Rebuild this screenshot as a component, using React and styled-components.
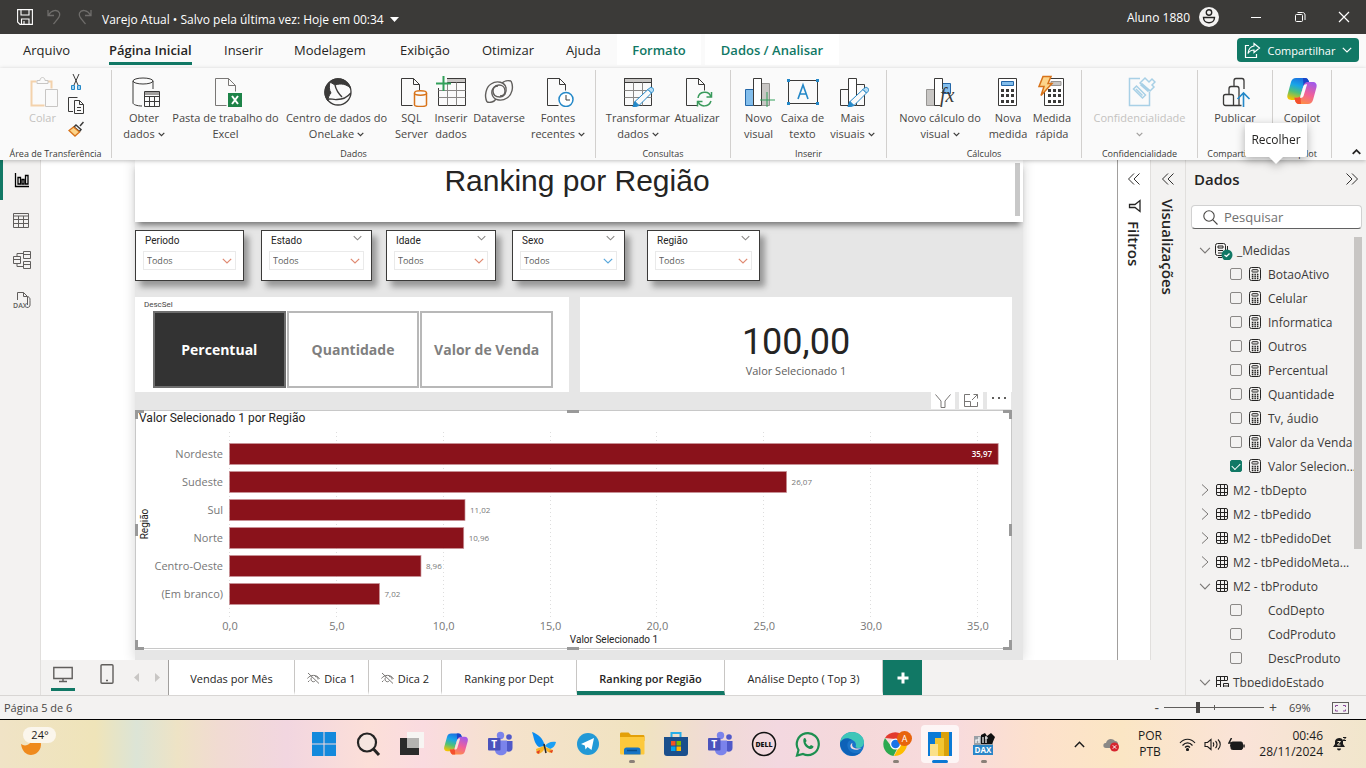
import React from 'react';
import styled, { createGlobalStyle, css } from 'styled-components';

const ui = "'Open Sans', 'Noto Sans', sans-serif";
const din = "Roboto, 'Open Sans', sans-serif";
const green = '#117865';

const Global = createGlobalStyle`
  * { box-sizing: border-box; }
  body { margin: 0; font-family: ${ui}; font-size: 12px; color: #252423; background: #f3f2f1; }
  button, input, select { font: inherit; color: inherit; }
  button { border: 0; padding: 0; background: none; cursor: pointer; }
  svg { display: block; flex: none; }
  h1, h2, p { margin: 0; font-weight: 400; }
`;

const Window = styled.div`
  display: flex;
  flex-direction: column;
  height: 100vh;
  min-height: 600px;
  overflow: hidden;
`;

/* ---------- title bar ---------- */
const TitleBar = styled.header`
  display: flex;
  align-items: center;
  height: 34px;
  flex: none;
  padding: 0 14px 0 16px;
  background: #3b3a38;
  color: #fff;
`;
const QuickTools = styled.div`
  display: flex;
  gap: 12px;
  margin-right: 8px;
`;
const FileName = styled.button`
  display: flex;
  align-items: center;
  gap: 6px;
  padding-top: 4px;
  font-size: 12px;
  white-space: nowrap;
`;
const Account = styled.div`
  display: flex;
  align-items: center;
  gap: 9px;
  margin-left: auto;
  font-size: 12px;
`;
const WindowButtons = styled.div`
  display: flex;
  gap: 28px;
  margin-left: 29px;
`;

/* ---------- menu ---------- */
const MenuBar = styled.nav`
  display: flex;
  height: 34px;
  flex: none;
  padding: 0 7px 0 23px;
  background: #fafafa;
  font-size: 13px;
`;
const MenuTab = styled.button`
  width: ${p => p.$w}px;
  flex: none;
  text-align: left;
  white-space: nowrap;
  height: 31px;
  span {
    display: inline-block;
    height: 31px;
    line-height: 32px;
    ${p => p.$active && css`font-weight: 600; border-bottom: 3px solid ${green};`}
  }
`;
const ContextTab = styled.button`
  width: ${p => p.$w}px;
  height: 31px;
  margin-right: 4px;
  background: #fff;
  color: ${green};
  font-weight: 600;
  white-space: nowrap;
`;
const ShareButton = styled.button`
  display: flex;
  align-items: center;
  justify-content: center;
  gap: 7px;
  width: 122px;
  height: 24px;
  margin: 4px 0 0 auto;
  border-radius: 4px;
  background: ${green};
  color: #fff;
  font-size: 11px;
`;

/* ---------- ribbon ---------- */
const Ribbon = styled.section`
  position: relative;
  z-index: 2;
  display: flex;
  height: 92px;
  flex: none;
  padding-top: 2px;
  background: #fafafa;
  box-shadow: 0 1px 4px rgba(0, 0, 0, 0.25);
  color: #3b3a39;
`;
const RibbonGroup = styled.div`
  display: flex;
  flex-direction: column;
  width: ${p => p.$w}px;
  flex: none;
  height: 88px;
  border-right: 1px solid #d2d0ce;
`;
const GroupItems = styled.div`
  display: flex;
  justify-content: center;
  flex: 1;
`;
const GroupName = styled.div`
  text-align: center;
  font-size: 9px;
  line-height: 9px;
  white-space: nowrap;
`;
const RibbonButton = styled.button`
  display: flex;
  flex-direction: column;
  align-items: center;
  width: ${p => p.$w}px;
  flex: none;
  padding-top: 5px;
  color: ${p => (p.disabled ? '#c4c2c0' : '#484644')};
  font-size: 11px;
  line-height: 16px;
  white-space: nowrap;
  > span { display: flex; align-items: center; gap: 3px; height: 16px; }
  > svg { margin-bottom: 3px; }
`;
const ClipTools = styled.div`
  display: flex;
  flex-direction: column;
  gap: 7px;
  padding: 4px 9px 0 0;
`;
const Collapse = styled.button`
  align-self: flex-end;
  margin: 0 5px 5px auto;
`;
const Tooltip = styled.div`
  position: absolute;
  right: 59px;
  top: 55px;
  width: 62px;
  height: 34px;
  line-height: 34px;
  text-align: center;
  font-size: 12px;
  background: #fff;
  color: #252423;
  border-radius: 2px;
  filter: drop-shadow(0 3px 5px rgba(0, 0, 0, 0.3));
  &::after {
    content: '';
    position: absolute;
    left: 23px;
    top: 33px;
    border: 8px solid transparent;
    border-top-color: #fff;
  }
`;

/* ---------- workspace ---------- */
const Workspace = styled.main`
  display: flex;
  flex: 1;
  min-height: 0;
`;
const Rail = styled.nav`
  display: flex;
  flex-direction: column;
  width: 41px;
  flex: none;
  border-right: 1px solid #e1dfdd;
`;
const RailButton = styled.button`
  display: flex;
  align-items: center;
  justify-content: center;
  height: 40px;
  border-left: 3px solid ${p => (p.$active ? green : 'transparent')};
`;
const Editor = styled.div`
  display: flex;
  flex-direction: column;
  flex: 1;
  min-width: 0;
`;
const CanvasRow = styled.div`
  display: flex;
  flex: 1;
  min-height: 0;
`;
const Stage = styled.div`
  display: flex;
  justify-content: center;
  flex: 1;
  min-width: 0;
  overflow: hidden;
  background: #fff;
`;
const ReportPage = styled.article`
  display: flex;
  flex-direction: column;
  width: 888px;
  max-width: 100%;
  background: #e6e6e6;
  box-shadow: 0 0 12px rgba(0, 0, 0, 0.16);
`;
const TitleCard = styled.div`
  display: flex;
  justify-content: space-between;
  height: 62px;
  flex: none;
  padding: 3px 3px 0 4px;
  background: #fff;
  box-shadow: 0 6px 6px -3px rgba(0, 0, 0, 0.5);
  h1 {
    flex: 1;
    text-align: center;
    font-family: 'Liberation Sans', Arial, sans-serif;
    font-size: 30px;
    line-height: 36px;
  }
`;
const CardScroll = styled.div`
  width: 5px;
  height: 53px;
  background: #c8c8c8;
`;
const Slicers = styled.div`
  display: flex;
  padding-top: 8px;
`;
const Slicer = styled.section`
  width: ${p => p.$w}px;
  margin-right: ${p => p.$gap}px;
  height: 51px;
  padding: 4px 7px 0;
  border: 1px solid #3b3a39;
  background: #fff;
  box-shadow: 5px 6px 6px rgba(0, 0, 0, 0.34);
`;
const SlicerHead = styled.div`
  display: flex;
  justify-content: space-between;
  padding: 0 2px 1px;
  font-family: ${din};
  font-size: 10px;
  line-height: 11px;
`;
const SelectBox = styled.div`
  display: grid;
  align-items: center;
  height: 19px;
  margin-top: 4px;
  border: 1px solid #eaeaea;
  select, svg { grid-area: 1 / 1; }
  select {
    appearance: none;
    width: 100%;
    border: 0;
    padding: 0 3px;
    background: none;
    font-size: 9px;
    color: #605e5c;
  }
  svg { justify-self: end; margin-right: 3px; pointer-events: none; }
`;
const Cards = styled.div`
  display: flex;
  gap: 11px;
  padding: 16px 11px 0 0;
`;
const Card = styled.section`
  flex: ${p => p.$grow} 1 0;
  height: 95px;
  background: #fff;
`;
const CardCaption = styled.div`
  padding: 3px 9px 0;
  font-size: 8px;
  line-height: 10px;
  color: #484644;
  font-family: ${din};
`;
const Tiles = styled.div`
  display: flex;
  gap: 1px;
  margin: 1px 16px 0 18px;
`;
const Tile = styled.button`
  flex: 1;
  height: 77px;
  border: 2px solid ${p => (p.$on ? '#6e6e6e' : '#b8b8b8')};
  background: ${p => (p.$on ? '#333' : '#fff')};
  color: ${p => (p.$on ? '#fff' : '#7f7f7f')};
  font-size: 14px;
  font-weight: 700;
`;
const Kpi = styled.div`
  text-align: center;
  padding-top: 24px;
  strong {
    display: block;
    font-family: ${din};
    font-size: 36px;
    line-height: 42px;
    font-weight: 400;
  }
  span { display: block; font-size: 11px; line-height: 16px; color: #605e5c; }
`;
const VisualTools = styled.div`
  display: flex;
  justify-content: flex-end;
  gap: 4px;
  height: 18px;
  padding-right: 12px;
`;
const VisualTool = styled.button`
  display: flex;
  align-items: center;
  justify-content: center;
  width: 24px;
  height: 17px;
  background: #fff;
`;
const ChartFrame = styled.figure`
  margin: 0 11px 0 0;
  background: #fff;
  svg { width: 100%; height: auto; }
`;
const CatLabel = styled.text`
  font: 11px ${ui};
  fill: #777;
  text-anchor: ${p => p.$anchor || 'end'};
`;
const ValLabel = styled.text`
  font: 8px ${ui};
  fill: ${p => (p.$inside ? '#fff' : '#777')};
  font-weight: ${p => (p.$inside ? 600 : 400)};
  text-anchor: ${p => (p.$inside ? 'end' : 'start')};
`;
const AxisName = styled.text`
  font: 10px ${din};
  fill: #252423;
  text-anchor: middle;
`;
const ChartTitle = styled.text`
  font: 12px ${din};
  fill: #252423;
`;

/* ---------- side panes ---------- */
const SlimPane = styled.aside`
  display: flex;
  flex-direction: column;
  align-items: center;
  width: ${p => p.$w}px;
  flex: none;
  padding-top: 12px;
  gap: 8px;
  border-right: 1px solid #e1dfdd;
  ${p => p.$white && css`background: #fff; border-left: 1px solid #a19f9d;`}
  > button { margin-bottom: 5px; }
  h2 { writing-mode: vertical-rl; font-size: 15px; line-height: 18px; font-weight: 600; }
`;
const DataPane = styled.aside`
  display: flex;
  flex-direction: column;
  width: 180px;
  flex: none;
  padding: 8px 4px 8px 5px;
`;
const DataHead = styled.div`
  display: flex;
  justify-content: space-between;
  align-items: center;
  padding: 0 3px;
  height: 21px;
  h2 { font-size: 15px; font-weight: 600; }
`;
const Search = styled.label`
  display: flex;
  align-items: center;
  gap: 6px;
  height: 24px;
  flex: none;
  margin-top: 16px;
  padding-left: 11px;
  border: 1px solid #d1d1d1;
  border-bottom-color: #616161;
  border-radius: 4px;
  background: #fff;
  input {
    width: 100%;
    min-width: 0;
    border: 0;
    padding: 0;
    outline: 0;
    background: none;
    font-size: 13px;
  }
  input::placeholder { color: #707070; opacity: 1; }
`;
const TreeWrap = styled.div`
  display: flex;
  flex: 1;
  min-height: 0;
  margin-top: 8px;
  overflow: hidden;
`;
const Tree = styled.ul`
  flex: 1;
  min-width: 0;
  margin: 1px 0 0;
  padding: 0 0 0 8px;
  list-style: none;
`;
const TreeRow = styled.li`
  display: flex;
  align-items: center;
  height: 24px;
  padding-left: ${p => (p.$field ? 31 : 0)}px;
  font-size: 12px;
  color: #3b3a39;
  white-space: nowrap;
`;
const TableToggle = styled.button`
  display: flex;
  align-items: center;
  gap: 4px;
`;
const FieldLabel = styled.label`
  display: flex;
  align-items: center;
  gap: 6px;
`;
const Check = styled.input`
  appearance: none;
  width: 12px;
  height: 12px;
  margin: 0;
  border: 1px solid #8a8886;
  border-radius: 2px;
  background: transparent;
  &:checked {
    border-color: ${green};
    background: ${green};
    display: grid;
    place-content: center;
  }
  &:checked::before {
    content: '';
    width: 7px;
    height: 4px;
    margin-bottom: 2px;
    border: solid #fff;
    border-width: 0 0 1px 1px;
    transform: rotate(-45deg);
  }
`;
const TreeScroll = styled.div`
  width: 8px;
  height: 312px;
  background: #c8c6c4;
`;

/* ---------- page tabs and status ---------- */
const PageBar = styled.div`
  display: flex;
  height: 35px;
  flex: none;
`;
const ViewModes = styled.div`
  display: flex;
  width: 128px;
  flex: none;
  align-items: center;
  padding-left: 10px;
  border-right: 1px solid #a19f9d;
`;
const ModeButton = styled.button`
  display: flex;
  justify-content: center;
  align-items: flex-start;
  width: 24px;
  height: 27px;
  margin-right: ${p => p.$gap}px;
  border-bottom: 3px solid ${p => (p.$active ? green : 'transparent')};
`;
const PageTab = styled.button`
  display: flex;
  align-items: center;
  justify-content: center;
  gap: 4px;
  width: ${p => p.$w}px;
  flex: none;
  padding-top: 5px;
  border-right: 1px solid #c8c6c4;
  border-bottom: 4px solid ${p => (p.$active ? green : '#fff')};
  background: #fff;
  font-size: 11px;
  font-weight: ${p => (p.$active ? 600 : 400)};
  white-space: nowrap;
`;
const AddPage = styled.button`
  display: flex;
  align-items: center;
  justify-content: center;
  width: 39px;
  background: ${green};
`;
const StatusBar = styled.footer`
  display: flex;
  align-items: center;
  height: 25px;
  flex: none;
  padding: 0 17px 0 4px;
  border-top: 1px solid #d8d6d4;
  border-bottom: 1px solid #000;
  color: #484644;
  font-size: 11px;
`;
const Zoom = styled.div`
  display: flex;
  align-items: center;
  gap: 5px;
  margin-left: auto;
  button { font-size: 14px; line-height: 14px; }
  output { width: 24px; margin: 0 14px 0 7px; }
`;
const Slider = styled.input`
  appearance: none;
  width: 100px;
  height: 11px;
  margin: 0;
  background:
    linear-gradient(#605e5c, #605e5c) 50px 50% / 1px 5px no-repeat,
    linear-gradient(#605e5c, #605e5c) 0 50% / 100% 1px no-repeat;
  &::-webkit-slider-thumb {
    appearance: none;
    width: 4px;
    height: 11px;
    background: #484644;
  }
`;

/* ---------- taskbar ---------- */
const Taskbar = styled.footer`
  display: flex;
  align-items: stretch;
  height: 48px;
  flex: none;
  color: #1b1b1b;
  background: linear-gradient(90deg, #f0e3c6 0, #efe4b9 7%, #dce4d6 10%, #eee3c5 13%, #f1dbd2 16%, #f2d6e0 21%, #fcdfd8 27%, #fadbe0 31%, #f5e2cc 37%, #f0e3c0 47%, #f0dbd5 52%, #f3d8e0 57%, #f5d9da 63%, #f8dbdd 70%, #fde1cc 76%, #fbe6c4 82%, #fae3d8 91%, #f1e6cc 100%);
`;
const Weather = styled.button`
  display: flex;
  width: 302px;
  flex: none;
  padding: 7px 0 0 21px;
`;
const Apps = styled.div`
  display: flex;
  flex: 1;
`;
const AppButton = styled.button`
  display: flex;
  flex-direction: column;
  align-items: center;
  width: 38px;
  height: 38px;
  margin: 5px 3px;
  padding-top: 6px;
  border-radius: 4px;
  background: ${p => (p.$active ? 'rgba(255,255,255,.72)' : 'none')};
  &::after {
    content: '';
    width: ${p => (p.$active ? 16 : 6)}px;
    height: 3px;
    flex: none;
    margin-top: 3px;
    border-radius: 2px;
    background: ${p => (p.$active ? '#0a78d4' : p.$open ? '#8a8078' : 'transparent')};
  }
`;
const Tray = styled.div`
  display: flex;
  align-items: center;
  padding-right: 12px;
  font-size: 12px;
  line-height: 16px;
`;
const TrayItem = styled.div`
  display: flex;
  justify-content: ${p => (p.$right ? 'flex-end' : 'center')};
  text-align: ${p => (p.$right ? 'right' : 'center')};
  width: ${p => p.$w}px;
  white-space: nowrap;
`;

/* ---------- icons ---------- */
const Svg = ({ s = 32, w, h, vb, children, ...r }) => (
  <svg width={w || s} height={h || s} viewBox={vb || `0 0 ${w || s} ${h || s}`} fill="none" stroke="#3b3a39" strokeWidth="1" aria-hidden="true" {...r}>{children}</svg>
);
const Chev = ({ w = 9, c = '#605e5c', sw = 1.2, up }) => (
  <Svg w={w} h={Math.ceil(w / 2) + 1} vb="0 0 10 6" stroke={c} strokeWidth={sw}><path d={up ? 'M.8 5.2 5 1l4.2 4.2' : 'M.8.8 5 5 9.2.8'} /></Svg>
);
const SmallChev = ({ c = '#3b3a39' }) => <Svg w={7} h={5} vb="0 0 7 5" stroke={c} strokeWidth="1.2"><path d="m.7.8 2.8 2.8L6.3.8" /></Svg>;
const Double = ({ right }) => (
  <Svg s={14} stroke="#323130"><path d={right ? 'M1.500 1.500 7 7l-5.500 5.500M7 1.500 12.500 7 7 12.500' : 'M7 1.500 1.500 7 7 12.500M12.500 1.500 7 7l5.500 5.500'} /></Svg>
);
const Doc = () => <path d="M5.500 3.500h12l6 6v6M5.500 3.500v27h11M17.500 3.500v6h6" />;
const Pencil = () => <g stroke="#2488c8" fill="#fff"><path d="m26 14.500 3.500 3.500L17 30.500l-6 2 2-6z" fill="#fafafa" /><path d="m26 14.500 1.500-1.500c2-2 5.500 1 3.500 3.500L29.500 18z" fill="#b5dcf5" /><path d="m13 26.500 3.500 3.500-5.500 2z" fill="#2488c8" /></g>;
const Grid = ({ x = 3 }) => (
  <g transform={`translate(${x} 0)`}><path d="M.5 3.500h27v4H.5z" fill="#c8c6c4" /><path d="M.5 3.500h27v27H.5z" /><path d="M.5 15.500h27M.5 22.500h27M9.500 7.500v23M18.500 7.500v23" stroke="#8a8886" /></g>
);
const CopilotMark = ({ s = 32, id, hole = '#fafafa' }) => (
  <Svg s={s} vb="0 0 32 32" stroke="none">
    <defs>
      <linearGradient id={id + 'a'} x1="0.6" y1="0" x2="0.3" y2="1"><stop offset="0" stopColor="#1b6fe0" /><stop offset=".35" stopColor="#19a5e8" /><stop offset=".65" stopColor="#4fc07a" /><stop offset="1" stopColor="#f5c400" /></linearGradient>
      <linearGradient id={id + 'b'} x1="0.7" y1="0" x2="0.3" y2="1"><stop offset="0" stopColor="#a35ae8" /><stop offset=".5" stopColor="#f0609a" /><stop offset="1" stopColor="#ff9040" /></linearGradient>
    </defs>
    <path d="M10 3h9c2.300 0 3.300 1.500 3.900 3.600l.8 2.700h-3c-2 0-3 1-3.600 3l-2.600 8.700c-.7 2.400-2 4-4.300 4H5.500c-3.200 0-4.800-2-4-5.200L5 7c.9-2.800 2.400-4 5-4z" fill={`url(#${id}a)`} />
    <path d="M17 3h2c2.300 0 3.300 1.500 3.900 3.600l.8 2.700h-3c-1.600 0-2.600.7-3.200 2z" fill="#1a45c8" />
    <path d="M22 29h-9c-2.300 0-3.300-1.500-3.900-3.600l-.8-2.700h3c2 0 3-1 3.600-3l2.600-8.700c.7-2.400 2-4 4.300-4h4.700c3.200 0 4.800 2 4 5.200L27 25c-.9 2.800-2.400 4-5 4z" fill={`url(#${id}b)`} />
    <path d="M15 29h-2c-2.300 0-3.300-1.500-3.900-3.600l-.8-2.700h3c1.600 0 2.600-.7 3.200-2z" fill="#f4502e" />
    <path d="M17.300 11.500c.5-1.600 1.400-2.300 2.800-2.300h1l-3.400 11.300c-.5 1.600-1.400 2.300-2.800 2.300h-1z" fill={hole} />
  </Svg>
);
const TeamsMark = () => (
  <Svg s={26} stroke="none"><circle cx="13.500" cy="4.500" r="3.700" fill="#7b83eb" /><circle cx="22" cy="6" r="2.800" fill="#5059c9" /><path d="M18 10h7.500v7c0 5-7.500 5-7.500 0z" fill="#5059c9" /><path d="M8 9.500h12V19c0 7-12 7-12 0z" fill="#7b83eb" /><rect x="1" y="7" width="12.500" height="12.500" rx="1" fill="#4b53bc" /><text x="7.200" y="17" textAnchor="middle" fill="#fff" fontFamily="Open Sans" fontSize="10" fontWeight="700">T</text></Svg>
);
const Calc = () => (
  <Svg w={14} h={14} stroke="#252423"><rect x="1.500" y=".5" width="11" height="13" rx="2" /><rect x="4" y="2.700" width="6" height="2.300" rx=".6" /><path d="M3.800 7.500h1.600m1 0h1.500m1 0h1.500M3.800 9.500h1.600m1 0h1.500m1 0h1.500M3.800 11.500h1.600m1 0h1.500m1 0h1.500" strokeWidth="1.300" /></Svg>
);
const TableMark = () => <Svg s={14} stroke="#252423"><rect x="1.500" y="1.500" width="11" height="11" rx="1.500" /><path d="M5.500 1.500v11M9.500 1.500v11M1.500 5.500h11M1.500 9.500h11" /></Svg>;

const I = {
  paste: <Svg vb="-2 0 32 32" stroke="#c8c6c4"><path d="M15.500 30.500h-13v-24h5m9 0h6v7" stroke="#f3d2ac" strokeWidth="2" /><path d="M8 8.500v-3h3c0-4 5-4 5 0h3v3z" fill="#fafafa" /><path d="M16.500 14.500h12v17h-12z" fill="#fafafa" /></Svg>,
  obter: <Svg vb="-2 0 32 32"><ellipse cx="13" cy="6" rx="10" ry="3" /><path d="M3 6v22c0 1.500 4 3 9 3M23 6v8" /><path d="M14.500 16.500h15v15h-15zM14.500 21.500h15m-15 5h15m-10-5v10m5-10v10" fill="#fafafa" /><path d="M15 17h14v3H15z" fill="#a19f9d" stroke="none" /></Svg>,
  excel: <Svg vb="-2 0 32 32" stroke="#797775"><path d="M3.500 3.500h13l7 7v6M3.500 3.500v27h11M16.500 3.500v7h7" /><path d="M16 18h14v14H16z" fill="#1d8348" stroke="none" /><path d="m20 21 6 8m0-8-6 8" stroke="#fff" strokeWidth="2" /></Svg>,
  lake: <Svg><circle cx="17" cy="17" r="13" strokeWidth="1.300" /><path d="M9 7C15 1 26 3 29.500 13 25 9 20 8 14 10z" fill="#3b3a39" /><path d="M9 7C3 12 2 20 7 26c0-3 1-6 3-8-2-3-2-7-1-11z" fill="#3b3a39" /><path d="M14 10c1 5 4 9 7 12M6 24.500c3-1.500 6 .5 10 0 6 0 11-3 13.800-6.500" strokeWidth="1.300" /></Svg>,
  sql: <Svg><Doc /><path d="M18.500 18v12c0 2 12 2 12 0V18" stroke="#d8731a" fill="#fafafa" strokeWidth="1.500" /><ellipse cx="24.500" cy="18" rx="6" ry="2.200" stroke="#d8731a" fill="#fafafa" strokeWidth="1.500" /></Svg>,
  inserir: <Svg><Grid x={3} /><path d="M0 3h12v10H0z" fill="#fafafa" stroke="none" /><path d="M8.500 1v15M1 8.500h15" stroke="#32a05a" strokeWidth="2" /></Svg>,
  dataverse: <Svg stroke="#605e5c" strokeWidth="1.400"><path d="M28 6c3 6 1 14-4 17-6 4-14 2-15-4-1-5 3-9 7-9 3 0 6 2 6 6 0 3-2 5-5 5" /><path d="M4 27C1 21 3 12 8 9c6-4 14-2 15 4 1 5-2 9-6 9-4 0-7-2-7-6 0-3 2-5 5-5" /><path d="M28 6c-3-1-7 0-9 2M4 27c3 1 7 0 9-3" /></Svg>,
  fontes: <Svg><Doc /><circle cx="24" cy="24.500" r="7" stroke="#2488c8" fill="#fff" strokeWidth="1.500" /><path d="M24 20v5h4" /></Svg>,
  transformar: <Svg><Grid x={2} /><Pencil /></Svg>,
  atualizar: <Svg><Doc /><g stroke="#3a9a5c" strokeWidth="1.500"><path d="M17 23c1-7 11-8 13-1M30 26c-2 6-11 7-13 0" /><path d="M30.500 17v5h-5M16.500 31.500v-5h5" /></g></Svg>,
  visual: <Svg><path d="M2.500 14.500h8v16h-8z" fill="#83beec" stroke="#2467a8" /><path d="M18.500 8.500h8v22h-8z" fill="#c8c6c4" stroke="#979593" /><path d="M10.500 3.500h8v27h-8z" fill="#fff" /><path d="M24 17v15M17 25h15" stroke="#32a05a" /></Svg>,
  caixa: <Svg><path d="M1.500 5.500h29v23h-29z" /><path d="m11 24 5-14 5 14m-8.500-5h7" stroke="#2488c8" strokeWidth="1.600" /><g fill="#2488c8" stroke="none"><path d="M0 4h3v3H0zM29 4h3v3h-3zM0 27h3v3H0zM29 27h3v3h-3z" /></g></Svg>,
  mais: <Svg><path d="M3.500 14.500h8v16h-8zM19.500 9.500h8v21h-8z" /><path d="M11.500 3.500h8v27h-8z" fill="#fff" /><Pencil /></Svg>,
  calculo: <Svg><path d="M2.500 14.500h8v16h-8z" fill="#c8c6c4" stroke="#979593" /><path d="M18.500 8.500h8v10h-8z" fill="#83beec" stroke="#2467a8" /><path d="M18.500 14V3.500h-8v27h6" fill="#fff" /><text x="16" y="27" stroke="none" fill="#3b3a39" fontFamily="Liberation Serif" fontStyle="italic" fontSize="20">fx</text></Svg>,
  medida: <Svg><path d="M6.500 3.500h18v27h-18z" fill="#fff" /><path d="M9.500 6.500h12v4h-12z" fill="#83beec" stroke="#2467a8" /><path d="M9 15.500h13M9 20.500h13M9 26.500h13" strokeWidth="3" strokeDasharray="3 2" /></Svg>,
  rapida: <Svg><path d="M8.500 3.500h19v27h-19z" fill="#fff" /><path d="M15 6.500h10v4H15z" fill="#c8c6c4" stroke="#979593" /><path d="M12 15.500h13M12 20.500h13M12 26.500h13" strokeWidth="3" strokeDasharray="3 2" /><path d="M7 1.500h8l-3 7h4l-11 12 3-9H3z" fill="#fcd48a" stroke="#d8731a" strokeWidth="1.500" /></Svg>,
  conf: <Svg stroke="#a8d0e6"><path d="M16 3.500H5.500v27h20V17" strokeWidth="1.500" /><path d="m9.500 14 3-3 9 9-3 3zM12 14l6.500 6.500" strokeWidth="1.500" /><path d="m16 8 5-5 4 4 3-3 3 3-3 3 2 2-4 4z" strokeWidth="1.500" /><path d="m17 9 8 7" strokeWidth="3" /></Svg>,
  publicar: <Svg vb="-3 0 32 32"><path d="M4.500 30.500h-1c-1.500 0-2-1-2-2v-7c0-1.500 1-2 2-2h6c1.500 0 2 1 2 2v9zM7 19v-5c0-1.500 1-2.500 2-2.500h6c1.500 0 2 1 2 2.500v8M12 11V6c0-1.500 1-2.500 2-2.500h6c1.500 0 2 1 2 2.500v8M11 30.500h8.500M17 22v8" strokeWidth="1.300" /><path d="M21.500 32V18.500M15.500 24l6-6 6 6" stroke="#2488c8" strokeWidth="1.600" /></Svg>,
};

/* ---------- data ---------- */
const menu = [['Arquivo', 86], ['Página Inicial', 115, true], ['Inserir', 70], ['Modelagem', 106], ['Exibição', 82], ['Otimizar', 84], ['Ajuda', 51]];
const groups = [
  { name: 'Dados', w: 484, items: [['obter', 52, 'Obter', 'dados', 1], ['excel', 111, 'Pasta de trabalho do', 'Excel'], ['lake', 111, 'Centro de dados do', 'OneLake', 1], ['sql', 39, 'SQL', 'Server'], ['inserir', 40, 'Inserir', 'dados'], ['dataverse', 56, 'Dataverse'], ['fontes', 62, 'Fontes', 'recentes', 1]] },
  { name: 'Consultas', w: 135, items: [['transformar', 68, 'Transformar', 'dados', 1], ['atualizar', 50, 'Atualizar']] },
  { name: 'Inserir', w: 156, items: [['visual', 42, 'Novo', 'visual'], ['caixa', 46, 'Caixa de', 'texto'], ['mais', 54, 'Mais', 'visuais', 1]] },
  { name: 'Cálculos', w: 195, items: [['calculo', 92, 'Novo cálculo do', 'visual', 1], ['medida', 44, 'Nova', 'medida'], ['rapida', 44, 'Medida', 'rápida']] },
  { name: 'Confidencialidade', w: 116, items: [['conf', 100, 'Confidencialidade', '', 1, true]] },
  { name: 'Compartilhar', w: 75, items: [['publicar', 60, 'Publicar']] },
];
const slicers = [['Periodo', 109, 17], ['Estado', 111, 14, '#e08a72'], ['Idade', 110, 16, '#e08a72'], ['Sexo', 113, 22, '#5aa8dc'], ['Região', 113, 0, '#e08a72']];
const bars = [['Nordeste', 35.97], ['Sudeste', 26.07], ['Sul', 11.02], ['Norte', 10.96], ['Centro-Oeste', 8.96], ['(Em branco)', 7.02]];
const fields = ['BotaoAtivo', 'Celular', 'Informatica', 'Outros', 'Percentual', 'Quantidade', 'Tv, áudio', 'Valor da Venda', 'Valor Selecion...'];
const pages = [['Vendas por Mês', 126], ['Dica 1', 74, 'h'], ['Dica 2', 73, 'h'], ['Ranking por Dept', 135], ['Ranking por Região', 148, 'a'], ['Análise Depto ( Top 3)', 158]];
const br = (n, d) => n.toFixed(d).replace('.', ',');

function RibbonItem({ item: [icon, w, a, b, menuMark, disabled] }) {
  return (
    <RibbonButton $w={w} disabled={disabled}>
      {I[icon]}
      <span>{a}</span>
      {(b !== undefined) && <span>{b}{menuMark && <SmallChev c={disabled ? '#a19f9d' : undefined} />}</span>}
    </RibbonButton>
  );
}

function Chart() {
  const x0 = 94.5, unit = 21.37;
  return (
    <ChartFrame>
      <svg viewBox="0 0 877 240" role="img" aria-label="Valor Selecionado 1 por Região">
        <rect x=".5" y=".5" width="876" height="238" fill="#fff" stroke="#c8c8c8" />
        <ChartTitle x="4" y="12">Valor Selecionado 1 por Região</ChartTitle>
        {[0, 5, 10, 15, 20, 25, 30, 35].map(t => (
          <g key={t}>
            <path d={`M${Math.floor(x0 + t * unit) + 0.5} 22v185`} stroke="#ddd" strokeDasharray="1 3" />
            <CatLabel $anchor="middle" x={x0 + 0.5 + t * unit} y="220">{br(t, 1)}</CatLabel>
          </g>
        ))}
        {bars.map(([name, v], i) => (
          <g key={name}>
            <rect x={x0} y={33.5 + i * 28} width={v * unit} height="21" fill="#8a121b" stroke="#c99499" strokeWidth=".7" />
            <CatLabel x="88" y={48 + i * 28}>{name}</CatLabel>
            <ValLabel $inside={i === 0} x={x0 + v * unit + (i === 0 ? -6 : 5)} y={47 + i * 28}>{br(v, 2)}</ValLabel>
          </g>
        ))}
        <AxisName x="479" y="233">Valor Selecionado 1</AxisName>
        <AxisName transform="translate(13 114) rotate(-90)">Região</AxisName>
        <g fill="#999">
          <path d="M0 0h9v3H3v6H0zM877 0h-9v3h6v6h3zM0 240h9v-3H3v-7H0zM877 240h-9v-3h6v-7h3z" />
          <path d="M432 0h12v3h-12zM432 237h12v3h-12zM0 114h3v12H0zM874 114h3v12h-3z" />
        </g>
      </svg>
    </ChartFrame>
  );
}

export default function App() {
  return (
    <Window>
      <Global />
      <TitleBar>
        <QuickTools>
          <Svg s={18} stroke="#fff" strokeWidth="1.100"><path d="M1.600 1.600h14.800v14.800H4l-2.400-2.400zM5 2v5h8V2M5.500 16v-5h7.500v5M8 13v3" /></Svg>
          <Svg s={18} stroke="#6f6d6b" strokeWidth="1.300"><path d="M2 2v5.500h6M2.500 7c3-5 9-6 11-2 1 3-1 5-6 11" /></Svg>
          <Svg s={18} stroke="#6f6d6b" strokeWidth="1.300"><path d="M15 2v5.500H9M14.500 7c-3-5-9-6-11-2-1 3 1 5 6 11" /></Svg>
        </QuickTools>
        <FileName>Varejo Atual • Salvo pela última vez: Hoje em 00:34<Svg w={9} h={5} stroke="none"><path d="M0 0h9L4.500 5z" fill="#fff" /></Svg></FileName>
        <Account>Aluno 1880
          <Svg s={20}><circle cx="10" cy="10" r="10" fill="#f3f2f1" stroke="none" /><circle cx="10" cy="5.500" r="2.700" stroke="#252423" strokeWidth="1.400" /><path d="M4.500 10.500h11c0 7-11 7-11 0z" stroke="#252423" strokeWidth="1.400" /></Svg>
        </Account>
        <WindowButtons>
          <button aria-label="Minimizar"><Svg s={16} stroke="#fff"><path d="M3 8.500h10" /></Svg></button>
          <button aria-label="Restaurar"><Svg s={16} stroke="#fff"><rect x="3.500" y="5.500" width="7" height="7" rx="1" /><path d="M5.500 3.500h5c1.500 0 2.500 1 2.500 2.500v5" /></Svg></button>
          <button aria-label="Fechar"><Svg s={16} stroke="#fff" strokeWidth="1.200"><path d="m3 3 10 10M13 3 3 13" /></Svg></button>
        </WindowButtons>
      </TitleBar>

      <MenuBar>
        {menu.map(([t, w, a]) => <MenuTab key={t} $w={w} $active={a}><span>{t}</span></MenuTab>)}
        <ContextTab $w={84}>Formato</ContextTab>
        <ContextTab $w={134}>Dados / Analisar</ContextTab>
        <ShareButton>
          <Svg s={17} stroke="#fff" strokeWidth="1.200"><path d="M5 3.500H1.500v12h11V12M10 1.500l5.500 4.500L10 10.500V8C7 8 5.500 9 4 11.500 4.500 7 6.500 4.500 10 4z" /></Svg>
          Compartilhar<Chev w={10} c="#fff" />
        </ShareButton>
      </MenuBar>

      <Ribbon>
        <RibbonGroup $w={112}>
          <GroupItems>
            <RibbonButton $w={50} disabled>{I.paste}<span>Colar</span></RibbonButton>
            <ClipTools>
              <Svg s={16}><path d="m5 0 5 11M11 0 6 11" /><path d="M3.500 11.500h3v4h-3zM9.500 11.500h3v4h-3z" stroke="#2488c8" fill="#9fd0f0" /></Svg>
              <Svg s={17}><path d="M5 14.500H.5V.5h9M6.500 3.500h5l4 4v9h-9zM11.500 3.500v4h4M9 10.500h4M9 13.500h4" /></Svg>
              <Svg s={16}><path d="m15.500 1-3.500 4M8 4l5 4.500-1.500 2L6 6z" strokeWidth="1.500" /><path d="M5.500 6 1 9.500 7 15l4.500-4z" fill="#fcd48a" stroke="#d8731a" strokeWidth="1.300" /></Svg>
            </ClipTools>
          </GroupItems>
          <GroupName>Área de Transferência</GroupName>
        </RibbonGroup>
        {groups.map(g => (
          <RibbonGroup key={g.name} $w={g.w}>
            <GroupItems>{g.items.map(it => <RibbonItem key={it[0]} item={it} />)}</GroupItems>
            <GroupName>{g.name}</GroupName>
          </RibbonGroup>
        ))}
        <RibbonGroup $w={59}>
          <GroupItems><RibbonButton $w={50}><CopilotMark id="cp" /><span>Copilot</span></RibbonButton></GroupItems>
          <GroupName>Copilot</GroupName>
        </RibbonGroup>
        <Collapse aria-label="Recolher faixa"><Chev w={9} up c="#252423" sw={2} /></Collapse>
        <Tooltip role="tooltip">Recolher</Tooltip>
      </Ribbon>

      <Workspace>
        <Rail>
          <RailButton $active aria-label="Relatório"><Svg s={16} stroke="#000" strokeWidth="1.300"><path d="M1.500 1v13.500H15M4 5.500h2.500v6.500H4zM8 7.500h2V12H8zM11.500 3.500h2.500V12h-2.500z" /></Svg></RailButton>
          <RailButton aria-label="Tabela"><Svg s={17} stroke="#605e5c"><path d="M.5 1.500h15v14H.5zM.5 4h15M.5 7.500h15M.5 11.500h15M5.500 4v11.500M10.500 4v11.500" /></Svg></RailButton>
          <RailButton aria-label="Modelo"><Svg s={18} stroke="#605e5c"><path d="M.5 5.500h7v7h-7zM.5 8.500h7M10.500.5h7v7h-7zM10.500 3.500h7M10.500 10.500h7v7h-7zM10.500 13.500h7M4 5.500v-3h6.500M4 12.500v3h6.500" /></Svg></RailButton>
          <RailButton aria-label="DAX"><Svg s={18} stroke="#605e5c"><path d="M4.500 9V1.500h6l4 4V14M10.500 1.500v4h4M15 5.500c2 1.500 2 1.500 2 4V14c0 1.500-1 2.500-3 2.500" /><text x="0" y="17" stroke="none" fill="#605e5c" fontFamily="Open Sans" fontWeight="600" fontSize="7">DAX</text></Svg></RailButton>
        </Rail>

        <Editor>
          <CanvasRow>
            <Stage>
              <ReportPage>
                <TitleCard><h1>Ranking por Região</h1><CardScroll /></TitleCard>
                <Slicers>
                  {slicers.map(([t, w, gap, c]) => (
                    <Slicer key={t} $w={w} $gap={gap}>
                      <SlicerHead><label htmlFor={t}>{t}</label>{c && <Chev w={9} c="#8a8886" />}</SlicerHead>
                      <SelectBox><select id={t}><option>Todos</option></select><Chev w={10} c={c || '#e08a72'} /></SelectBox>
                    </Slicer>
                  ))}
                </Slicers>
                <Cards>
                  <Card $grow={434}>
                    <CardCaption>DescSel</CardCaption>
                    <Tiles><Tile $on>Percentual</Tile><Tile>Quantidade</Tile><Tile>Valor de Venda</Tile></Tiles>
                  </Card>
                  <Card $grow={432}><Kpi><strong>100,00</strong><span>Valor Selecionado 1</span></Kpi></Card>
                </Cards>
                <VisualTools>
                  <VisualTool aria-label="Filtros"><Svg s={16} stroke="#797775"><path d="M.5 1.500 6 8v6.500h4V8l5.500-6.500" /></Svg></VisualTool>
                  <VisualTool aria-label="Modo de foco"><Svg s={15} stroke="#797775"><path d="M6 1.500H.5v12h13V9M.5 8.500h6v5M8 7l5.500-5.500M9.500 1.500h4v4" /></Svg></VisualTool>
                  <VisualTool aria-label="Mais opções"><Svg s={15} stroke="none"><path d="M0 4h2v2H0zM6 4h2v2H6zM12 4h2v2h-2z" fill="#605e5c" /></Svg></VisualTool>
                </VisualTools>
                <Chart />
              </ReportPage>
            </Stage>
            <SlimPane $w={34} $white>
              <button aria-label="Expandir filtros"><Double /></button>
              <Svg s={14} stroke="#252423" strokeWidth="1.300"><path d="M13 1.500v11L8 8.500H2.500v-3H8z" /></Svg>
              <h2>Filtros</h2>
            </SlimPane>
          </CanvasRow>
          <PageBar>
            <ViewModes>
              <ModeButton $active $gap={20} aria-label="Área de trabalho"><Svg s={20} stroke="#605e5c" strokeWidth="1.400"><path d="M.8 3.500h18.400v11H.8zM10 14.500v3M6 17.500h8" /></Svg></ModeButton>
              <ModeButton $gap={15} aria-label="Celular"><Svg w={14} h={20} stroke="#605e5c" strokeWidth="1.400"><rect x="1" y=".8" width="12" height="18.400" rx="1" /><path d="M6 16.500h2" /></Svg></ModeButton>
              <Svg w={26} h={9} stroke="none"><path d="M5 0v9L0 4.500zM21 0v9l5-4.500z" fill="#c8c6c4" /></Svg>
            </ViewModes>
            {pages.map(([t, w, k]) => (
              <PageTab key={t} $w={w} $active={k === 'a'}>
                {k === 'h' && <Svg w={13} h={12} stroke="#797775"><path d="M.5 6.500C3 2.500 10 2 12.500 7M1 1l11 10.500M4.500 5.500c-2 3 2 6 4 3M2.500 8.500 1 10M8 4.500c2 0 3 1 3 3" /></Svg>}
                {t}
              </PageTab>
            ))}
            <AddPage aria-label="Nova página"><Svg s={12} stroke="#fff" strokeWidth="3"><path d="M6 .5v11M.5 6h11" /></Svg></AddPage>
          </PageBar>
        </Editor>

        <SlimPane $w={35}><button aria-label="Expandir visualizações"><Double /></button><h2>Visualizações</h2></SlimPane>

        <DataPane>
          <DataHead><h2>Dados</h2><Double right /></DataHead>
          <Search>
            <Svg s={15} stroke="#484644" strokeWidth="1.100"><circle cx="6" cy="6" r="5.200" /><path d="m9.700 9.700 4.800 4.800" /></Svg>
            <input type="search" placeholder="Pesquisar" aria-label="Pesquisar" />
          </Search>
          <TreeWrap>
            <Tree>
              <TreeRow>
                <TableToggle><Chev w={12} c="#797775" sw={1} />
                  <Svg w={18} h={19} stroke="#252423"><rect x=".5" y="2.500" width="10" height="12" rx="2" /><path d="M3 5h5v2H3zM3 9.500h5M3 12h4M12.500 5v6M3 16.500h4" /><circle cx="12" cy="14" r="5.500" fill={green} stroke="none" /><path d="m9.500 14 2 1.500 3-3" stroke="#fff" strokeWidth="1.300" /></Svg>
                  <span>_Medidas</span>
                </TableToggle>
              </TreeRow>
              {fields.map((f, i) => (
                <TreeRow key={f} $field><FieldLabel><Check type="checkbox" defaultChecked={i === 8} /><Calc />{f}</FieldLabel></TreeRow>
              ))}
              {['M2 - tbDepto', 'M2 - tbPedido', 'M2 - tbPedidoDet', 'M2 - tbPedidoMeta...'].map(t => (
                <TreeRow key={t}><TableToggle><Svg w={12} h={12} stroke="#797775"><path d="m3 .5 6 5.500-6 5.500" /></Svg><TableMark /><span>{t}</span></TableToggle></TreeRow>
              ))}
              <TreeRow><TableToggle><Chev w={12} c="#797775" sw={1} /><TableMark /><span>M2 - tbProduto</span></TableToggle></TreeRow>
              {['CodDepto', 'CodProduto', 'DescProduto'].map(f => (
                <TreeRow key={f} $field><FieldLabel><Check type="checkbox" /><Svg s={14} />{f}</FieldLabel></TreeRow>
              ))}
              <TreeRow><TableToggle><Chev w={12} c="#797775" sw={1} /><Svg s={14} stroke="#252423"><path d="M12.500 5V1.500h-11v11H6M5.500 1.500v11M9.500 1.500V6M1.500 5.500h11M1.500 9.500H6" /><path d="M8.500 8.500h5v5h-5zM8.500 11h5" /></Svg><span>TbpedidoEstado</span></TableToggle></TreeRow>
            </Tree>
            <TreeScroll />
          </TreeWrap>
        </DataPane>
      </Workspace>

      <StatusBar>
        Página 5 de 6
        <Zoom>
          <button aria-label="Menos zoom">-</button>
          <Slider type="range" min="0" max="100" defaultValue="33" aria-label="Zoom" />
          <button aria-label="Mais zoom">+</button>
          <output>69%</output>
          <Svg w={17} h={12} stroke="#605e5c"><rect x=".5" y=".5" width="16" height="11" /><path d="M3.500 5V3.500H6M11 3.500h2.500V5M3.500 7.500V9H6M11 9h2.500V7.500" stroke="#8a4a9a" /></Svg>
        </Zoom>
      </StatusBar>

      <Taskbar>
        <Weather aria-label="Clima">
          <Svg w={36} h={32} stroke="none"><path d="M0 17c4 3 9 1 11-4h8c3 6-1 15-9 15-5 0-9-4-10-11z" fill="#ef8a1d" /><rect x="2" y="0" width="33" height="16" rx="8" fill="#fbf6ec" /><text x="19" y="12" textAnchor="middle" fill="#1b1b1b" fontFamily="Open Sans" fontSize="11">24°</text></Svg>
        </Weather>
        <Apps>
          <AppButton aria-label="Iniciar"><Svg s={26} stroke="none"><path d="M1 1h11.500v11.500H1zM13.500 1H25v11.500H13.500zM1 13.500h11.500V25H1zM13.500 13.500H25V25H13.500z" fill="#1489dc" /></Svg></AppButton>
          <AppButton aria-label="Pesquisar"><Svg s={26} stroke="#252423" strokeWidth="2.200"><circle cx="12" cy="11.500" r="9" fill="#f6e6e0" /><path d="m18.500 18 5.500 6" strokeWidth="3" /></Svg></AppButton>
          <AppButton aria-label="Visão de tarefas"><Svg s={26} stroke="none"><path d="M1 7h19v17H1z" fill="#2b2b2b" /><path d="M8 1h17v16H8z" fill="#f7f5f3" /><path d="M8 7h12v10H8z" fill="#b5b3b1" /></Svg></AppButton>
          <AppButton aria-label="Copilot"><CopilotMark s={26} id="ct" hole="#f9e4da" /></AppButton>
          <AppButton aria-label="Teams"><TeamsMark /></AppButton>
          <AppButton aria-label="Borboleta"><Svg s={26} stroke="none"><path d="M1 1c6 2 11 6 13 14l-6 1C3 13 3 6 1 1z" fill="#0b8cf0" /><path d="M14 15c2-3 6-5 11-4-1 4-3 6-6 7z" fill="#1ba0f5" /><path d="M13 15 5 18l1 5c4 0 7-3 8-7zM14 16l8 3-1 3c-3 0-6-2-7-5z" fill="#f8b52a" /><path d="m5 21 4-2-1 4zM18 20l3 2 1-3z" fill="#e23b2a" /><path d="m13 13 2 9" stroke="#252423" strokeWidth="1.500" /></Svg></AppButton>
          <AppButton aria-label="Telegram"><Svg s={26} stroke="none"><circle cx="13" cy="13" r="11" fill="#2299d6" /><path d="m6 13 13-6-2.500 12-4-3-2 2.500-.7-4z" fill="#fff" /></Svg></AppButton>
          <AppButton $open aria-label="Explorador"><Svg s={26} stroke="none"><path d="M1 3c0-1 .5-1.500 1.500-1.500h7L12 4H24c1 0 1.500.5 1.500 1.500V10H1z" fill="#e3a008" /><path d="M1 6h24.500v16c0 1-.5 1.500-1.500 1.500H2.500C1.500 23.500 1 23 1 22z" fill="#fdc93c" /><path d="M5 23.500V19c0-1.500 1-2.500 2.500-2.500H19c1.500 0 2.500 1 2.500 2.500v4.500z" fill="#1674c4" /><path d="M8 19.500h10" stroke="#0a4f8c" strokeWidth="1.500" /></Svg></AppButton>
          <AppButton aria-label="Store"><Svg s={26} stroke="none"><path d="M8.500 6V2h9v4" stroke="#27aee8" strokeWidth="2" /><path d="M1 6h24v16c0 2-1 3-3 3H4c-2 0-3-1-3-3z" fill="#1a4f8c" /><path d="M8 10h4.500v4.500H8z" fill="#f25022" /><path d="M13.500 10H18v4.500h-4.500z" fill="#7fba00" /><path d="M8 15.500h4.500V20H8z" fill="#00a4ef" /><path d="M13.500 15.500H18V20h-4.500z" fill="#ffb900" /></Svg></AppButton>
          <AppButton aria-label="Teams pessoal"><TeamsMark /></AppButton>
          <AppButton aria-label="Dell"><Svg s={26} stroke="#111" strokeWidth="1.500"><circle cx="13" cy="13" r="11.500" /><text x="13" y="16" textAnchor="middle" stroke="none" fill="#111" fontFamily="Open Sans" fontWeight="800" fontSize="7">DELL</text></Svg></AppButton>
          <AppButton aria-label="WhatsApp"><Svg s={26} stroke="#1d8f50" strokeWidth="2.200"><path d="M2 24.500 3.500 19A11 11 0 1 1 8 23z" /><path d="M8.500 8c1-1.500 2-1 2.500.5l.6 1.500-1 1.400c1 2 2 3 4 3.800l1.400-1.300 2.500 1.300c0 2.500-2.500 3.300-4.500 2.500C10.500 16.500 7.500 12 8.500 8z" fill="#1d8f50" stroke="none" /></Svg></AppButton>
          <AppButton aria-label="Edge"><Svg s={26} stroke="none"><circle cx="13" cy="13" r="12" fill="#1a73c8" /><path d="M1 12C2 5 7 1 13 1c7 0 12 5 12 10 0 4-3 6-6 6-2 0-3-1-2-3C17 8 6 5 1 12z" fill="#3fc6b8" /><path d="M1 12c2-5 8-6 12-3-5 0-6 6-3 10 3 4 8 4 12 2-4 5-13 5-17 0-3-3-4-6-4-9z" fill="#0d62b8" /><path d="M13.500 12c-1.500 3 1 7 9 5-4 3-10 2-11-1-.5-2 .5-3.500 2-4z" fill="#f3d9e0" /></Svg></AppButton>
          <AppButton $open aria-label="Chrome"><Svg w={32} h={26} stroke="none"><path d="M5 7a12 12 0 0 1 20.500 0L15 8z" fill="#e33b2e" /><path d="M5 7a12 12 0 0 0 8.500 18l4-8L11 15z" fill="#2da94f" /><path d="M25.500 7.500A12 12 0 0 1 14 25l5-9-2-7z" fill="#fdbd00" /><circle cx="15.500" cy="13" r="5.500" fill="#fff" /><circle cx="15.500" cy="13" r="4.300" fill="#1a73e8" /><circle cx="24.500" cy="7.500" r="7.500" fill="#e8640c" /><text x="24.500" y="11" textAnchor="middle" fill="#fff" fontFamily="Open Sans" fontSize="9">A</text></Svg></AppButton>
          <AppButton $active aria-label="Power BI"><Svg s={26} stroke="none"><path d="M1 1h24v24H1z" fill="#0a7ad6" /><path d="M14 1h8v24h-8z" fill="#d9a00b" /><path d="M8 7h9v18H8z" fill="#f3c530" /><path d="M3 13h8v12H3z" fill="#fbe08a" /></Svg></AppButton>
          <AppButton $open aria-label="DAX Studio"><Svg s={26} stroke="none"><path d="M3 5h19v9H3z" fill="#9aa0a6" /><path d="m10 4 4-2 2 3 4-3 4 4-3 7H10z" fill="#111" /><path d="M5 12V9h3M8 6v6M12 6v6M15 5v7M14 7h3" stroke="#fff" strokeWidth="1.200" /><path d="M2 14h20v10H2z" fill="#2a86c8" /><text x="12" y="22" textAnchor="middle" fill="#fff" fontFamily="Open Sans" fontWeight="700" fontSize="8">DAX</text></Svg></AppButton>
        </Apps>
        <Tray>
          <TrayItem $w={31}><Chev w={11} up c="#1b1b1b" sw={1.3} /></TrayItem>
          <TrayItem $w={32}><Svg w={17} h={15} stroke="none"><path d="M3 11c-4 0-3-6 0-5C4 1 10 1 12 4c4 0 4 6 1 7z" fill="#8a8886" /><circle cx="11.500" cy="10" r="4.500" fill="#d6252f" /><path d="m9.800 8.300 3.400 3.400m0-3.400-3.400 3.400" stroke="#fff" /></Svg></TrayItem>
          <TrayItem $w={46}>POR<br />PTB</TrayItem>
          <TrayItem $w={28}><Svg w={17} h={13} stroke="#1b1b1b" strokeWidth="1.200"><path d="M1 5c4-5 11-5 15 0M3.500 7.500c3-3.500 7-3.500 10 0M6 9.500c1.500-1.500 3.500-1.500 5 0" /><circle cx="8.500" cy="11.500" r="1" fill="#1b1b1b" /></Svg></TrayItem>
          <TrayItem $w={22}><Svg w={17} h={13} stroke="#1b1b1b" strokeWidth="1.100"><path d="M1 4.500h2.500L7 1.500v10l-3.500-3H1zM9 4.500c1 1 1 3 0 4M11.500 3c2 2 2 5 0 7M14 1.500c3 3 3 7 0 10" /></Svg></TrayItem>
          <TrayItem $w={26}><Svg w={17} h={13} stroke="#1b1b1b"><rect x="3" y="4" width="11.500" height="7.500" rx="1.500" fill="#1b1b1b" /><path d="M16 6.500v3" strokeWidth="1.500" /><path d="M3.500 0 1 5h3L2.500 8.500" strokeWidth="1.500" /></Svg></TrayItem>
          <TrayItem $w={74} $right><div>00:46<br />28/11/2024</div></TrayItem>
          <TrayItem $w={31}><Svg s={16} stroke="none"><path d="M2 11h12l-2-3V5c0-4-7-4-8 0v3zM6 12.500h4c0 2.500-4 2.500-4 0z" fill="#1b1b1b" /><path d="M6.500 5.500h3l-3 3.500h3" stroke="#f1e6cc" /><path d="M12 1.500h3l-3 3h3" stroke="#1b1b1b" /></Svg></TrayItem>
        </Tray>
      </Taskbar>
    </Window>
  );
}
